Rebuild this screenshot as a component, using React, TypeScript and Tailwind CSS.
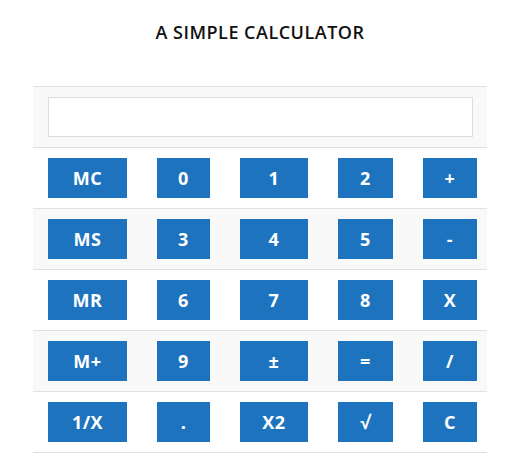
const rows: string[][] = [
  ['MC', '0', '1', '2', '+'],
  ['MS', '3', '4', '5', '-'],
  ['MR', '6', '7', '8', 'X'],
  ['M+', '9', '±', '=', '/'],
  ['1/X', '.', 'X2', '√', 'C'],
]

// column widths taken from the screenshot
const widths = ['w-[79px]', 'w-[53px]', 'w-[68px]', 'w-[55px]', 'w-[54px]']

export default function App() {
  return (
    <div className="min-h-[462px] w-[528px] bg-white font-['Open_Sans',sans-serif] text-[#111]">
      <h1 className="pt-[20px] pr-[8px] text-center text-[18px] leading-[24px] font-semibold tracking-[0.5px] text-[#111]">
        A SIMPLE CALCULATOR
      </h1>

      <div className="mt-[42px] ml-[33px] w-[454px] border-b border-[#e0e0e0]">
        <div className="border-t border-[#e0e0e0] bg-[#f9f9f9] px-[15px] py-[10px]">
          <input
            type="text"
            className="block h-[40px] w-[425px] border border-[#dddddd] bg-white px-2 outline-none"
          />
        </div>

        {rows.map((row, i) => (
          <div
            key={i}
            className={`flex gap-[30px] border-t border-[#e0e0e0] py-[10px] pl-[15px] ${
              i % 2 === 1 ? 'bg-[#f9f9f9]' : 'bg-white'
            }`}
          >
            {row.map((label, j) => (
              <button
                key={label}
                className={`flex h-[40px] items-center justify-center bg-[#1e73be] text-[18px] font-bold tracking-[0.5px] text-white ${widths[j]}`}
              >
                {label}
              </button>
            ))}
          </div>
        ))}
      </div>
    </div>
  )
}
